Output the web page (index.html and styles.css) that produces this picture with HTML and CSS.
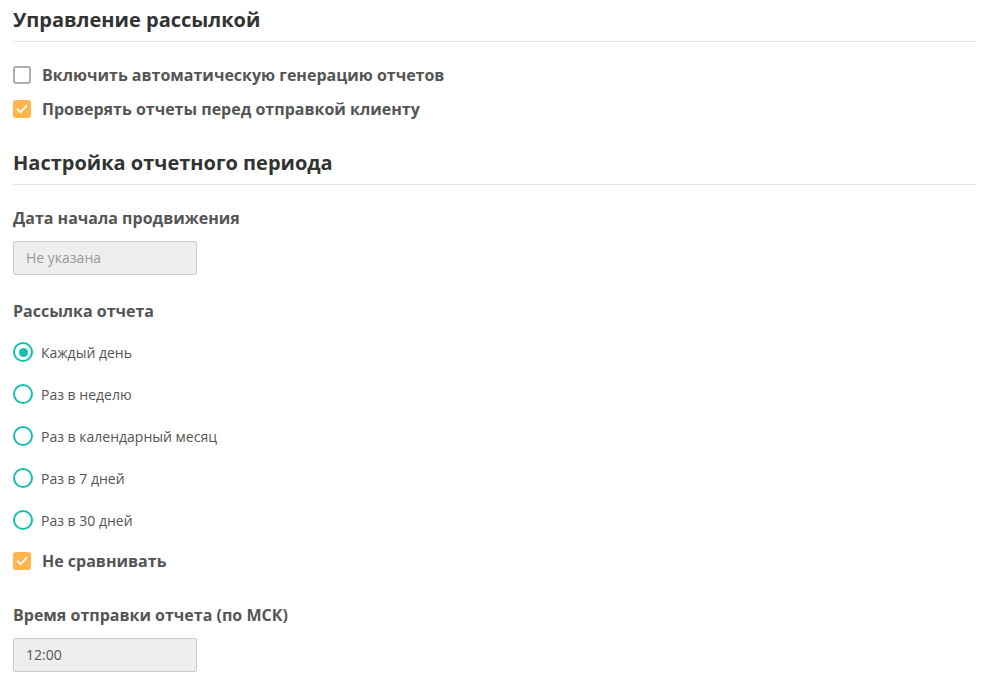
FILE: index.html
```html
<!DOCTYPE html>
<html lang="ru">
<head>
<meta charset="utf-8">
<link rel="stylesheet" href="styles.css">
</head>
<body>
<div class="page">
  <h2 class="section-title">Управление рассылкой</h2>
  <div class="checks">
    <label class="check"><span class="box"></span><span class="check-text">Включить автоматическую генерацию отчетов</span></label>
    <label class="check"><span class="box checked"><svg viewBox="0 0 18 18" width="18" height="18"><path d="M4.5 9.2 L7.7 12.2 L13.5 5.8" fill="none" stroke="#fff" stroke-width="1.8" stroke-linecap="round" stroke-linejoin="round"/></svg></span><span class="check-text">Проверять отчеты перед отправкой клиенту</span></label>
  </div>
  <h2 class="section-title second">Настройка отчетного периода</h2>
  <div class="field-label first">Дата начала продвижения</div>
  <div class="input placeholder">Не указана</div>
  <div class="field-label">Рассылка отчета</div>
  <div class="radios">
    <div class="radio"><span class="circle on"></span><span>Каждый день</span></div>
    <div class="radio"><span class="circle"></span><span>Раз в неделю</span></div>
    <div class="radio"><span class="circle"></span><span>Раз в календарный месяц</span></div>
    <div class="radio"><span class="circle"></span><span>Раз в 7 дней</span></div>
    <div class="radio"><span class="circle"></span><span>Раз в 30 дней</span></div>
  </div>
  <label class="check solo"><span class="box checked"><svg viewBox="0 0 18 18" width="18" height="18"><path d="M4.5 9.2 L7.7 12.2 L13.5 5.8" fill="none" stroke="#fff" stroke-width="1.8" stroke-linecap="round" stroke-linejoin="round"/></svg></span><span class="check-text">Не сравнивать</span></label>
  <div class="field-label time">Время отправки отчета (по МСК)</div>
  <div class="input">12:00</div>
</div>
</body>
</html>
```
FILE: styles.css
```css
* { box-sizing: border-box; }
html, body { margin: 0; padding: 0; background: #fff; }
body { font-family: "Open Sans", "Liberation Sans", sans-serif; color: #555; }
.page { width: 976px; padding: 8px 0 0 13px; display: flex; flex-direction: column; align-items: flex-start; }
.section-title {
  align-self: stretch;
  margin: 0;
  font-size: 20px;
  line-height: 24px;
  font-weight: 700;
  color: #333;
  padding-bottom: 9px;
  border-bottom: 1px solid #e5e5e5;
}
.section-title.second { margin-top: 33px; }
.checks { display: flex; flex-direction: column; gap: 16px; margin-top: 24px; }
.check { display: flex; align-items: center; height: 18px; gap: 11px; }
.check.solo { margin-top: 22px; }
.box {
  width: 18px; height: 18px; flex: none;
  border: 2px solid #a9afb6; border-radius: 3px; background: #fff;
  display: flex;
}
.box.checked { background: #ffb54a; border: none; }
.box svg { display: block; }
.check-text { font-size: 16px; font-weight: 700; color: #555; line-height: 20px; }
.field-label { font-size: 16px; font-weight: 700; line-height: 20px; margin-top: 26px; color: #555; }
.field-label.first { margin-top: 23px; }
.field-label.time { margin-top: 35px; }
.input {
  margin-top: 13px;
  width: 184px; height: 34px;
  background: #eee; border: 1px solid #ccc; border-radius: 2px;
  padding: 0 12px;
  font-size: 14px; line-height: 32px; color: #555;
}
.input.placeholder { color: #999; }
.radios { display: flex; flex-direction: column; gap: 22px; margin-top: 21px; }
.radio { display: flex; align-items: center; height: 20px; gap: 8px; font-size: 14px; color: #555; }
.circle {
  width: 20px; height: 20px; flex: none; border-radius: 50%;
  border: 2.5px solid #17bfae; background: #fff;
  display: flex; align-items: center; justify-content: center;
}
.circle.on::after { content: ""; width: 9px; height: 9px; border-radius: 50%; background: #17bfae; }
```
